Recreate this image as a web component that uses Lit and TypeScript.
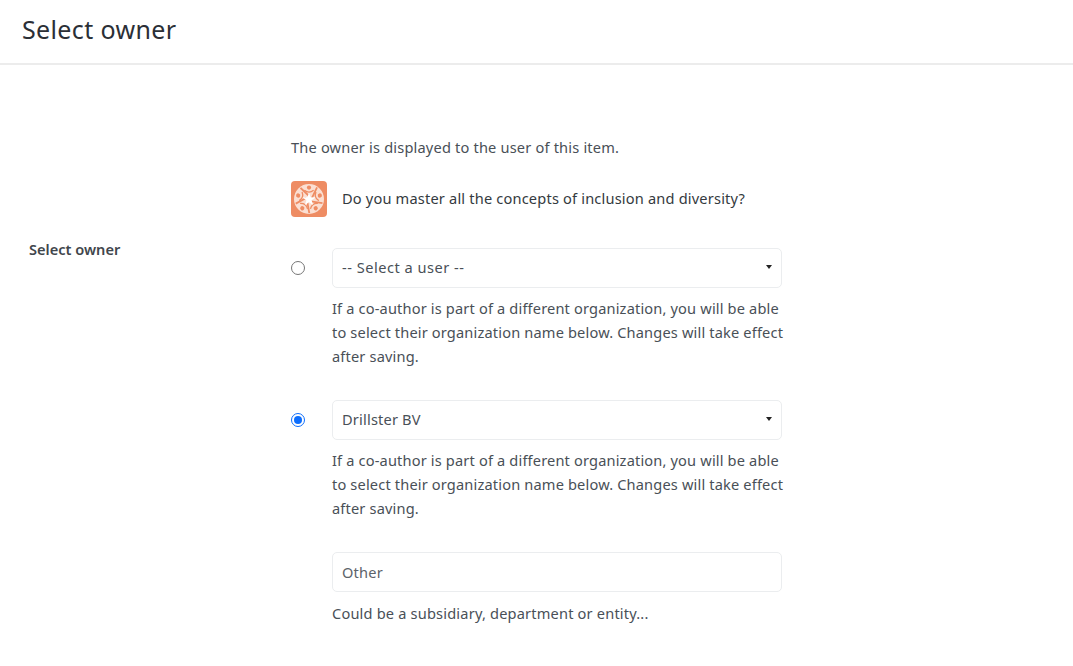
import { LitElement, html, svg, css } from "lit";
import { customElement } from "lit/decorators.js";

const HELP = html`If a co-author is part of a different organization, you will be able<br />to select their organization name below. Changes will take effect<br />after saving.`;

@customElement("app-root")
export class AppRoot extends LitElement {
  static styles = css`
    :host { display: block; height: 666px; overflow: hidden; background: #fff; color: #495057; font: 14.6px/24px "Noto Sans", sans-serif; letter-spacing: .18px; }
    * { box-sizing: border-box; }
    header { height: 65px; border-bottom: 2px solid #ececec; padding: 11px 22px 0; }
    h1 { margin: 0; font-size: 25px; line-height: 36px; font-weight: 400; color: #2b2f36; letter-spacing: .36px; }
    main { display: grid; grid-template-columns: 291px 491px; padding-top: 70px; }
    .label { align-self: start; margin: 102px 0 0 29px; font-weight: 600; color: #3f464c; letter-spacing: 0; }
    .intro { height: 24px; }
    .promo { display: flex; align-items: center; gap: 15px; margin-top: 21px; color: #343a40; height: 36px; }
    .promo svg { display: block; flex: none; margin-top: 2px; }
    .option { display: grid; grid-template-columns: 41px 450px; align-items: start; }
    .first { margin-top: 32px; }
    .second { margin-top: 32px; }
    .radio { width: 14px; height: 14px; border-radius: 50%; border: 1.5px solid #767676; margin-top: 13px; background: #fff; }
    .radio.on { border: 1.5px solid #0d6efd; display: flex; align-items: center; justify-content: center; }
    .radio.on::after { content: ""; width: 8px; height: 8px; border-radius: 50%; background: #0d6efd; }
    .field { display: flex; align-items: center; justify-content: space-between; height: 40px; padding: 0 9px; border: 1.5px solid #ebedef; border-radius: 5px; background: #fff; }
    .select { padding-bottom: 2px; }
    .placeholder { letter-spacing: .5px; }
    .caret { width: 0; height: 0; border-left: 3.5px solid transparent; border-right: 3.5px solid transparent; border-top: 4px solid #222; }
    .help { margin: 8px 0 0; white-space: nowrap; letter-spacing: .16px; }
    .other { margin: 32px 0 0; color: #5c636a; }
    .note { margin: 9px 0 0; }
  `;

  logo() {
    const angles = [0, 72, 144, 216, 288];
    return html`<svg width="36" height="36" viewBox="0 0 36 36" aria-hidden="true">
      <rect width="36" height="36" rx="4" fill="#ee8c63"></rect>
      <circle cx="18" cy="18" r="15" fill="#fbdfd2"></circle>
      ${angles.map((a) => svg`<g transform="rotate(${a} 18 18)">
        <path d="M18 15 L9.5 6.8" stroke="#ee8c63" stroke-width="1.8" fill="none"></path>
        <circle cx="18" cy="6.6" r="2.1" fill="#ee8c63"></circle>
        <path d="M13.4 9.2 Q18 13 22.6 9.2" stroke="#ee8c63" stroke-width="1.3" fill="none"></path>
      </g>`)}
      <path d="M18 11.5 L19.6 16.2 L24.5 16.4 L20.6 19.3 L22 24 L18 21.2 L14 24 L15.4 19.3 L11.5 16.4 L16.4 16.2 Z" fill="#fff"></path>
    </svg>`;
  }

  render() {
    return html`
      <header><h1>Select owner</h1></header>
      <main>
        <div class="label">Select owner</div>
        <div>
          <div class="intro">The owner is displayed to the user of this item.</div>
          <div class="promo">${this.logo()}<span>Do you master all the concepts of inclusion and diversity?</span></div>
          <div class="option first">
            <div class="radio"></div>
            <div>
              <div class="field select"><span class="placeholder">-- Select a user --</span><span class="caret"></span></div>
              <p class="help">${HELP}</p>
            </div>
          </div>
          <div class="option second">
            <div class="radio on"></div>
            <div>
              <div class="field select"><span>Drillster BV</span><span class="caret"></span></div>
              <p class="help">${HELP}</p>
              <div class="field other"><span>Other</span></div>
              <p class="note">Could be a subsidiary, department or entity...</p>
            </div>
          </div>
        </div>
      </main>
    `;
  }
}
